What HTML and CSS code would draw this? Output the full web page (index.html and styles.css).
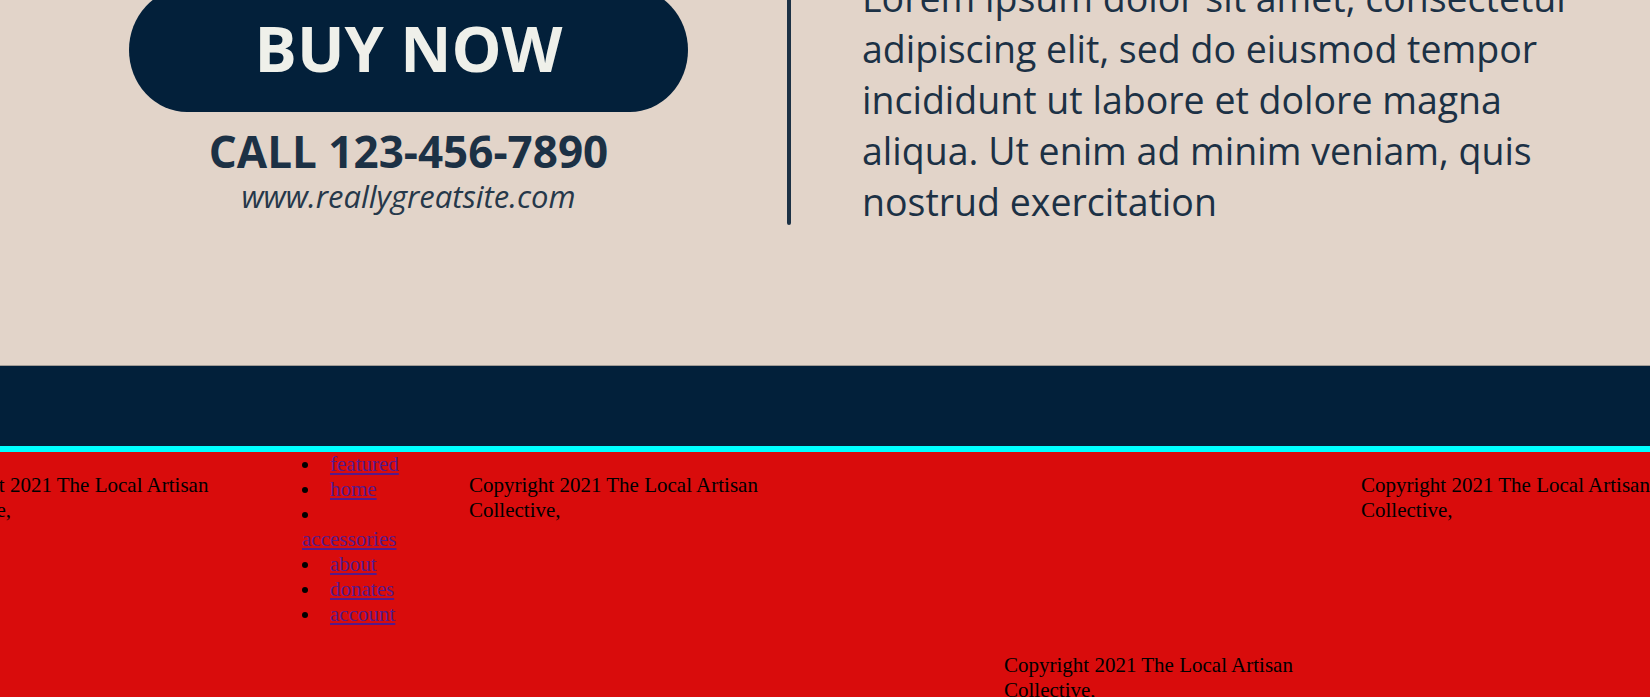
FILE: index.html
```html
<!DOCTYPE html>
<html lang="en">
<head>
<meta charset="utf-8">
<title>The Local Artisan Collective</title>
<link rel="stylesheet" href="styles.css">
</head>
<body>
<section class="hero">
  <div class="hero-inner">
    <div class="cta">
      <a class="buy" href="#">BUY NOW</a>
      <p class="call">CALL 123-456-7890</p>
      <p class="site">www.reallygreatsite.com</p>
    </div>
    <div class="rule"></div>
    <p class="lorem">Lorem ipsum dolor sit amet, consectetur<br>adipiscing elit, sed do eiusmod tempor<br>incididunt ut labore et dolore magna<br>aliqua. Ut enim ad minim veniam, quis<br>nostrud exercitation</p>
  </div>
</section>
<div class="band"></div>
<footer class="footer">
  <p class="col c1">Copyright 2021 The Local Artisan Collective,</p>
  <ul class="links">
    <li><a href="#">featured</a></li>
    <li><a href="#">home</a></li>
    <li><a href="#">accessories</a></li>
    <li><a href="#">about</a></li>
    <li><a href="#">donates</a></li>
    <li><a href="#">account</a></li>
  </ul>
  <p class="col c3">Copyright 2021 The Local Artisan Collective,</p>
  <p class="col c4">Copyright 2021 The Local Artisan Collective,</p>
  <p class="col c5">Copyright 2021 The Local Artisan Collective,</p>
</footer>
</body>
</html>
```
FILE: styles.css
```css
html, body {
  margin: 0;
  padding: 0;
  overflow: hidden;
}

body {
  font-family: "Liberation Serif", "Times New Roman", serif;
  background: #d90c0c;
}

.hero {
  height: 365px;
  overflow: hidden;
  background: #e2d4c9;
  border-bottom: 1px solid #a29c96;
  font-family: "Open Sans", sans-serif;
  color: #1c3145;
}

.hero-inner {
  display: flex;
  align-items: flex-start;
  margin-top: -40px;
  padding-left: 129px;
}

.cta {
  flex: 0 0 559px;
  display: flex;
  flex-direction: column;
  align-items: center;
  margin-top: 28px;
}

.buy {
  display: flex;
  align-items: center;
  justify-content: center;
  align-self: stretch;
  height: 124px;
  padding-bottom: 4px;
  box-sizing: border-box;
  border-radius: 58px / 62px;
  background: #03203a;
  color: #eff0ea;
  font-size: 63px;
  font-weight: 700;
  line-height: 70px;
  text-decoration: none;
}

.call {
  margin: 15px 0 0;
  font-size: 44px;
  font-weight: 700;
  line-height: 48px;
  color: #1c3145;
}

.site {
  margin: 3.5px 0 0;
  font-size: 31px;
  font-style: italic;
  line-height: 34px;
  color: #26384a;
}

.rule {
  flex: 0 0 4px;
  height: 265px;
  margin-left: 99px;
  border-radius: 2px;
  background: #1c3145;
}

.lorem {
  margin: 12.3px 0 0 71px;
  font-size: 37.5px;
  line-height: 51px;
  color: #1c3145;
  white-space: nowrap;
}

.band {
  height: 80px;
  background: #02203a;
  border-bottom: 6px solid #00ffff;
}

.footer {
  display: flex;
  align-items: flex-start;
  background: #d90c0c;
  font-size: 21px;
  color: #000;
  min-height: 300px;
}

.col {
  flex: 0 0 300px;
  margin: 21px 0 0 57px;
}

.c1 {
  margin-left: -80.5px;
}

.c4 {
  margin-top: 201px;
  margin-left: 235px;
}

.links {
  flex: 0 0 110px;
  margin: 0 0 0 82.5px;
  padding: 0;
  list-style-position: inside;
}

.links a {
  color: #551a8b;
}
```
